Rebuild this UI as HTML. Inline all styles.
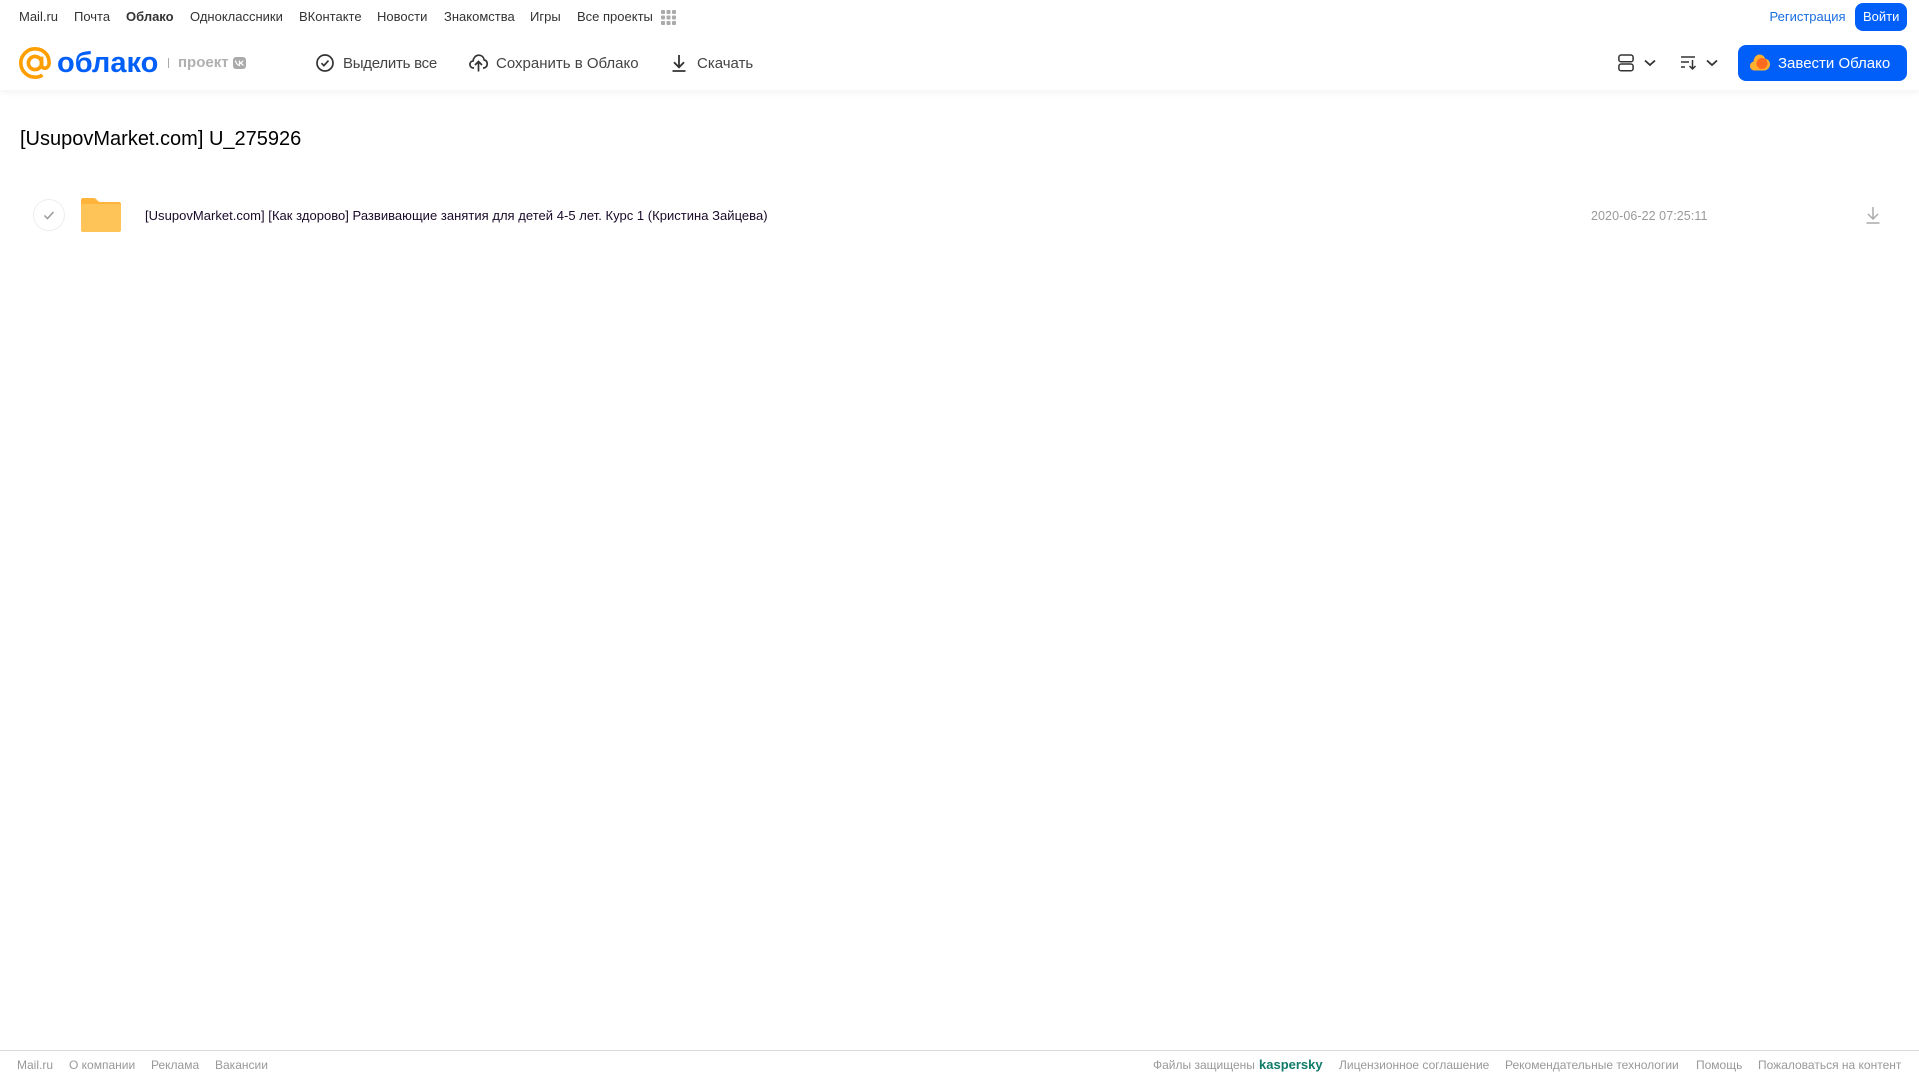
<!DOCTYPE html>
<html lang="ru">
<head>
<meta charset="utf-8">
<title>Облако</title>
<style>
html,body{margin:0;padding:0;background:#fff;}
body{position:relative;width:1919px;height:1079px;overflow:hidden;font-family:"Liberation Sans",Arial,sans-serif;}
.t{position:absolute;white-space:nowrap;line-height:20px;}
.n{top:7px;font-size:13px;color:#333;}
.b{top:53.500px;font-size:15px;color:#444;}
.f{top:1055px;font-size:12px;color:#999;}
svg{position:absolute;display:block;overflow:visible;}
#hdr{position:absolute;left:0;top:0;width:1919px;height:90px;background:#fff;box-shadow:0 1px 8px rgba(0,0,0,.07);}
#ftr{position:absolute;left:0;top:1050px;width:1919px;height:1px;background:#d9d9d9;}
.btn{position:absolute;background:#005ff9;border-radius:8px;}
</style>
</head>
<body>
<div id="hdr"></div>

<span class="t n" style="left:19px">Mail.ru</span>
<span class="t n" style="left:74px">Почта</span>
<span class="t n" style="left:126px;font-weight:700">Облако</span>
<span class="t n" style="left:190px">Одноклассники</span>
<span class="t n" style="left:299px">ВКонтакте</span>
<span class="t n" style="left:377px">Новости</span>
<span class="t n" style="left:444px">Знакомства</span>
<span class="t n" style="left:530px">Игры</span>
<span class="t n" style="left:577px">Все проекты</span>
<svg style="left:661px;top:10px" width="15" height="15" viewBox="0 0 15 15" fill="#aaa">
<rect x="0" y="0" width="4" height="4" rx="1"/><rect x="5.500" y="0" width="4" height="4" rx="1"/><rect x="11" y="0" width="4" height="4" rx="1"/>
<rect x="0" y="5.500" width="4" height="4" rx="1"/><rect x="5.500" y="5.500" width="4" height="4" rx="1"/><rect x="11" y="5.500" width="4" height="4" rx="1"/>
<rect x="0" y="11" width="4" height="4" rx="1"/><rect x="5.500" y="11" width="4" height="4" rx="1"/><rect x="11" y="11" width="4" height="4" rx="1"/>
</svg>

<span class="t" style="left:1769.500px;top:7px;font-size:13px;color:#1a6fe0">Регистрация</span>
<div class="btn" style="left:1855px;top:3px;width:52px;height:28px"></div>
<span class="t" style="left:1863px;top:7px;font-size:13px;color:#fff">Войти</span>

<!-- logo -->
<svg style="left:19px;top:47px" width="32" height="32" viewBox="0 0 32 32" fill="none" stroke="#ff9e00" stroke-width="3.600">
<circle cx="16" cy="16" r="6.600"/>
<path d="M22.600 9.600V18c0 4.600 7.300 4.600 7.500-2C30.300 7.500 24 1.800 16 1.800 8.200 1.800 1.800 8.200 1.800 16S8.200 30.200 16 30.200c3 0 5.300-.7 7.500-2.100"/>
</svg>
<span class="t" style="left:57px;top:44.500px;font-size:29px;line-height:36px;font-weight:700;color:#005ff9;">облако</span>
<div style="position:absolute;left:168px;top:58px;width:1px;height:10px;background:#aaa"></div>
<span class="t" style="left:178px;top:53px;font-size:15px;font-weight:700;color:#b0b0b0;">проект</span>
<div style="position:absolute;left:233px;top:57px;width:13px;height:12px;background:#aaa;border-radius:3px"></div>
<svg style="left:235px;top:60px" width="9" height="6" viewBox="0 0 9 6" fill="none" stroke="#fff" stroke-width="1.200"><path d="M.5 .5C1 3.500 3 5.500 4.500 5.500V.5M4.500 3C6.500 3 7.500 1.500 8 .5M4.500 3C6.500 3 7.500 4.500 8.500 5.500"/></svg>

<!-- toolbar -->
<svg style="left:316px;top:54px" width="18" height="18" viewBox="0 0 18 18" fill="none" stroke="#333" stroke-width="1.700">
<circle cx="9" cy="9" r="8"/><path d="M5.500 9.200l2.400 2.400 4.600-5"/>
</svg>
<span class="t b" style="left:343px;letter-spacing:-.25px">Выделить все</span>
<svg style="left:469px;top:54px" width="19" height="18" viewBox="0 0 19 18" fill="none" stroke="#333" stroke-width="1.700">
<path d="M5 14H4.500C2.300 14 .9 12.300.9 10.500c0-1.900 1.300-3.300 3.100-3.500C4.500 3.600 6.800 1.200 9.700 1.200c2.900 0 5 2 5.500 4.800 2 .3 3 2 3 4 0 2.200-1.600 4-3.700 4H14"/>
<path d="M9.500 17.500V8M6 11l3.500-3.500L13 11"/>
</svg>
<span class="t b" style="left:496px">Сохранить в Облако</span>
<svg style="left:671px;top:54px" width="16" height="18" viewBox="0 0 16 18" fill="none" stroke="#333" stroke-width="1.800">
<path d="M8 1v12M3 8.300L8 13.300l5-5M1.500 17h13"/>
</svg>
<span class="t b" style="left:697px">Скачать</span>

<svg style="left:1618px;top:54px" width="16" height="18" viewBox="0 0 16 18" fill="none" stroke="#333" stroke-width="1.500">
<rect x=".9" y="1" width="14.200" height="6.800" rx="2.200"/><rect x=".9" y="10" width="14.200" height="6.800" rx="2.200"/>
</svg>
<svg style="left:1644px;top:59px" width="12" height="8" viewBox="0 0 12 8" fill="none" stroke="#333" stroke-width="1.800"><path d="M1 1.500l5 4.500 5-4.500"/></svg>
<svg style="left:1681px;top:55px" width="16" height="15" viewBox="0 0 16 15" fill="none" stroke="#333" stroke-width="1.500">
<path d="M0 2h14M0 7h8M0 12h4M11.500 5v9M8.500 11l3 3 3-3"/>
</svg>
<svg style="left:1706px;top:59px" width="12" height="8" viewBox="0 0 12 8" fill="none" stroke="#333" stroke-width="1.800"><path d="M1 1.500l5 4.500 5-4.500"/></svg>

<div class="btn" style="left:1738px;top:45px;width:169px;height:36px"></div>
<svg style="left:1750px;top:54px" width="20" height="17" viewBox="0 0 20 17">
<path fill="#ffb02e" d="M4.500 16.500C2 16.500 0 14.500 0 12c0-2.200 1.500-4 3.500-4.400C3.900 3.300 6.500 .5 9.500 .5c2.700 0 5 1.800 5.700 4.300 2.700.3 4.800 2.500 4.800 5.500 0 3.400-2.700 6.200-6 6.200z"/>
<circle cx="12" cy="9.500" r="5.500" fill="#ff6a1f"/>
</svg>
<span class="t" style="left:1778px;top:53.500px;font-size:15px;color:#fff;">Завести Облако</span>

<!-- title -->
<span class="t" style="left:20px;top:125.500px;font-size:20px;line-height:26px;color:#000">[UsupovMarket.com] U_275926</span>

<!-- row -->
<svg style="left:33px;top:199px" width="32" height="32" viewBox="0 0 32 32" fill="none">
<circle cx="16" cy="16" r="15.500" stroke="#eee"/>
<path d="M11.500 16.500l3 3 6-6.500" stroke="#999" stroke-width="1.500"/>
</svg>
<svg style="left:81px;top:198px" width="40" height="34" viewBox="0 0 40 34">
<path fill="#ffb53c" d="M2 0h10c2 0 3 .7 4 2s2 2 4 2h18c1.100 0 2 .9 2 2v26c0 1.100-.9 2-2 2H2c-1.100 0-2-.9-2-2V2C0 .9.900 0 2 0z"/>
<path fill="#ffc457" d="M0 8c0-1.100.9-2 2-2h36c1.100 0 2 .9 2 2v24c0 1.100-.9 2-2 2H2c-1.100 0-2-.9-2-2z"/>
</svg>
<span class="t" style="left:145px;top:206px;font-size:13px;color:#1a0a2a;letter-spacing:.026px">[UsupovMarket.com] [Как здорово] Развивающие занятия для детей 4-5 лет. Курс 1 (Кристина Зайцева)</span>
<span class="t" style="left:1591px;top:206px;font-size:12.500px;color:#999;letter-spacing:.07px">2020-06-22 07:25:11</span>
<svg style="left:1866px;top:206px" width="14" height="18" viewBox="0 0 14 18" fill="none" stroke="#aaa" stroke-width="1.500">
<path d="M7 1v12M2 8l5 5 5-5M.5 17h13"/>
</svg>

<!-- footer -->
<div id="ftr"></div>
<span class="t f" style="left:17px">Mail.ru</span>
<span class="t f" style="left:69px">О компании</span>
<span class="t f" style="left:151px">Реклама</span>
<span class="t f" style="left:215px">Вакансии</span>
<span class="t f" style="left:1153px">Файлы защищены</span>
<span class="t" style="left:1259px;top:1055px;font-size:13px;font-weight:700;color:#0f7b68;">kaspersky</span>
<span class="t f" style="left:1339px">Лицензионное соглашение</span>
<span class="t f" style="left:1505px">Рекомендательные технологии</span>
<span class="t f" style="left:1696px">Помощь</span>
<span class="t f" style="left:1758px">Пожаловаться на контент</span>
</body>
</html>
